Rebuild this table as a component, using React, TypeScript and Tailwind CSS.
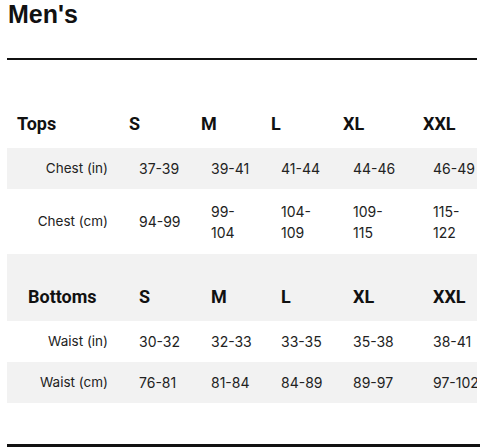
import React from "react";

const cols = "grid grid-cols-[122px_72px_70px_72px_80px_54px]";
const dataFont = { fontFamily: "Inter, 'Noto Sans', sans-serif" };
const headFont = { fontFamily: "Roboto, 'Liberation Sans', sans-serif" };

function HeaderRow({ label, bg, labelPad, cellPad }: { label: string; bg: string; labelPad: string; cellPad: string }) {
  const sizes = ["S", "M", "L", "XL", "XXL"];
  return (
    <div className={`${cols} h-[67px] ${bg} items-end pb-[12px] text-[18px] leading-[24px] font-bold text-[#111]`} style={headFont}>
      <div className={labelPad}>{label}</div>
      {sizes.map((s) => (
        <div key={s} className={cellPad}>{s}</div>
      ))}
    </div>
  );
}

function DataRow({ label, values, bg, tall }: { label: string; values: React.ReactNode[]; bg: string; tall?: boolean }) {
  return (
    <div className={`${cols} ${tall ? "h-[65px]" : "h-[41px]"} ${bg} items-center text-[14px] leading-[21px] text-[#222] whitespace-nowrap`} style={dataFont}>
      <div className="text-right pr-[21px] text-[13.5px]">{label}</div>
      {values.map((v, i) => (
        <div key={i} className="pl-[10px]">{v}</div>
      ))}
    </div>
  );
}

export default function App() {
  return (
    <div className="w-[480px] h-[448px] bg-white overflow-hidden relative">
      <h1 className="pl-[8px] text-[25px] leading-[28px] font-bold text-[#111]" style={{ fontFamily: "'Liberation Sans', Arial, sans-serif" }}>
        Men's
      </h1>
      <div className="mt-[30px] ml-[7px] w-[470px] h-[2px] bg-[#111]" />
      <div className="mt-[21px] ml-[7px] w-[470px] overflow-hidden">
        <HeaderRow label="Tops" bg="bg-white" labelPad="pl-[10px]" cellPad="pl-0" />
        <DataRow label="Chest (in)" bg="bg-[#f2f2f2]" values={["37-39", "39-41", "41-44", "44-46", "46-49"]} />
        <DataRow
          label="Chest (cm)"
          bg="bg-white"
          tall
          values={[
            "94-99",
            <>99-<br />104</>,
            <>104-<br />109</>,
            <>109-<br />115</>,
            <>115-<br />122</>,
          ]}
        />
        <HeaderRow label="Bottoms" bg="bg-[#f2f2f2]" labelPad="pl-[21px]" cellPad="pl-[10px]" />
        <DataRow label="Waist (in)" bg="bg-white" values={["30-32", "32-33", "33-35", "35-38", "38-41"]} />
        <DataRow label="Waist (cm)" bg="bg-[#f2f2f2]" values={["76-81", "81-84", "84-89", "89-97", "97-102"]} />
      </div>
      <div className="mt-[41px] ml-[7px] w-[473px] h-[3px] bg-[#111]" />
    </div>
  );
}
